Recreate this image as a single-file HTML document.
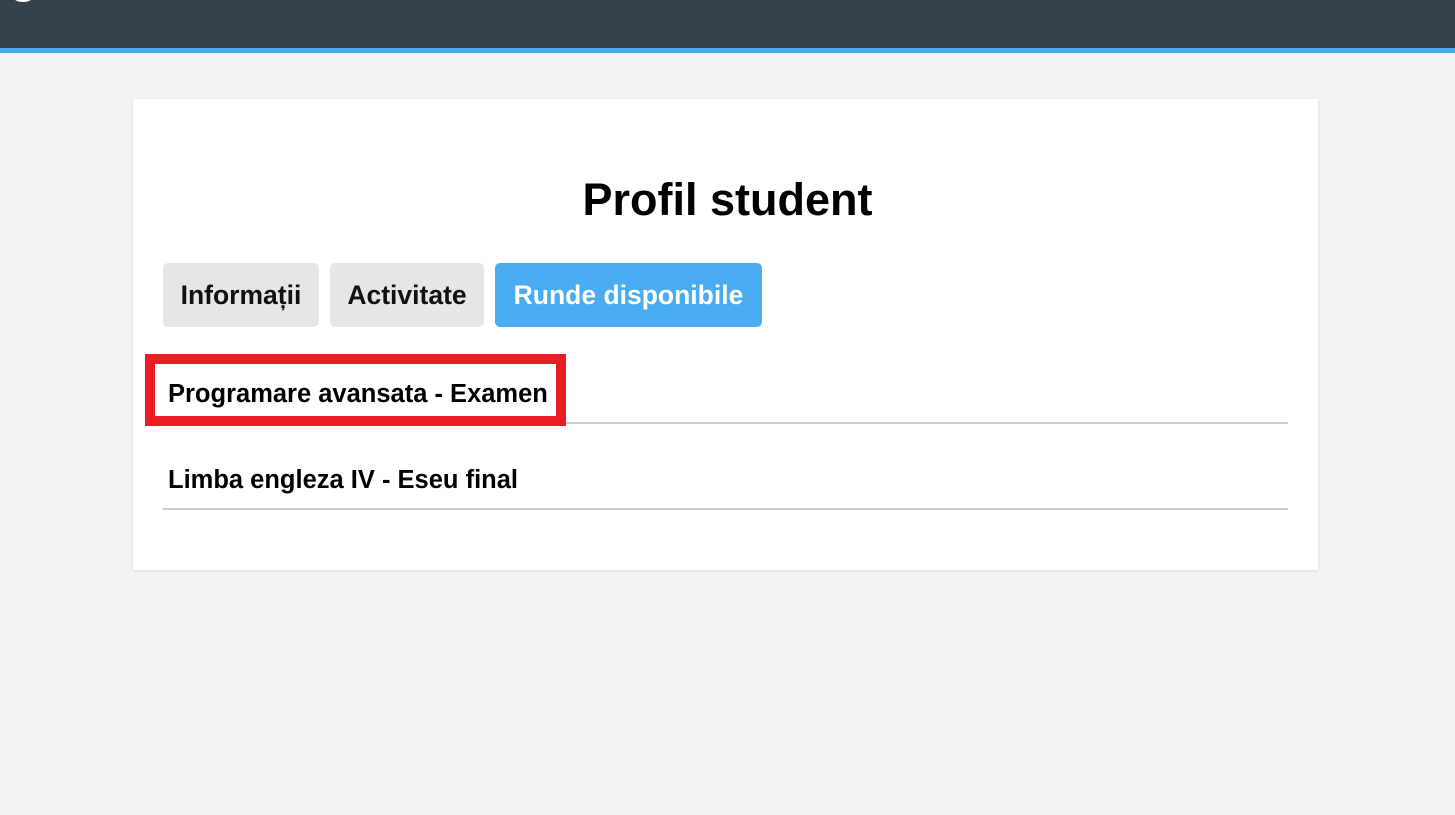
<!DOCTYPE html>
<html><head><style>
body{margin:0;background:#f3f3f3;font-family:"Liberation Sans",Arial,sans-serif;width:1455px;height:815px;overflow:hidden;position:relative}
.hdr{position:absolute;left:0;top:0;width:1455px;height:48px;background:#36434c;border-bottom:5px solid #4aacf0}
.logo{position:absolute;left:14px;top:-6px;width:18px;height:8px;border-radius:50%;background:#fff}
.card{position:absolute;left:133px;top:99px;width:1185px;height:471px;background:#fff;box-shadow:0 1px 3px rgba(0,0,0,.1)}
h1{position:absolute;left:0;width:100%;top:174px;margin:0;text-align:center;font-size:45px;line-height:52px;font-weight:bold;color:#000}
.tab{position:absolute;top:263px;height:64px;line-height:64px;text-align:center;font-size:26.5px;font-weight:bold;border-radius:5px;background:#e6e6e6;color:#111}
.row{position:absolute;left:163px;width:1125px;border-bottom:2px solid #ccc;font-size:25.5px;font-weight:bold;color:#000;box-sizing:border-box;height:64px;line-height:68px;padding-left:5px}
.red{position:absolute;left:145px;top:354px;width:401px;height:52px;border:10px solid #ed1c24}
</style></head><body>
<div class="hdr"><div class="logo"></div></div>
<div class="card"></div>
<h1>Profil student</h1>
<div class="tab" style="left:163px;width:156px">Informații</div>
<div class="tab" style="left:330px;width:154px">Activitate</div>
<div class="tab" style="left:495px;width:267px;background:#4aacf0;color:#fff">Runde disponibile</div>
<div class="row" style="top:360px">Programare avansata - Examen</div>
<div class="row" style="top:446px">Limba engleza IV - Eseu final</div>
<div class="red"></div>
</body></html>
